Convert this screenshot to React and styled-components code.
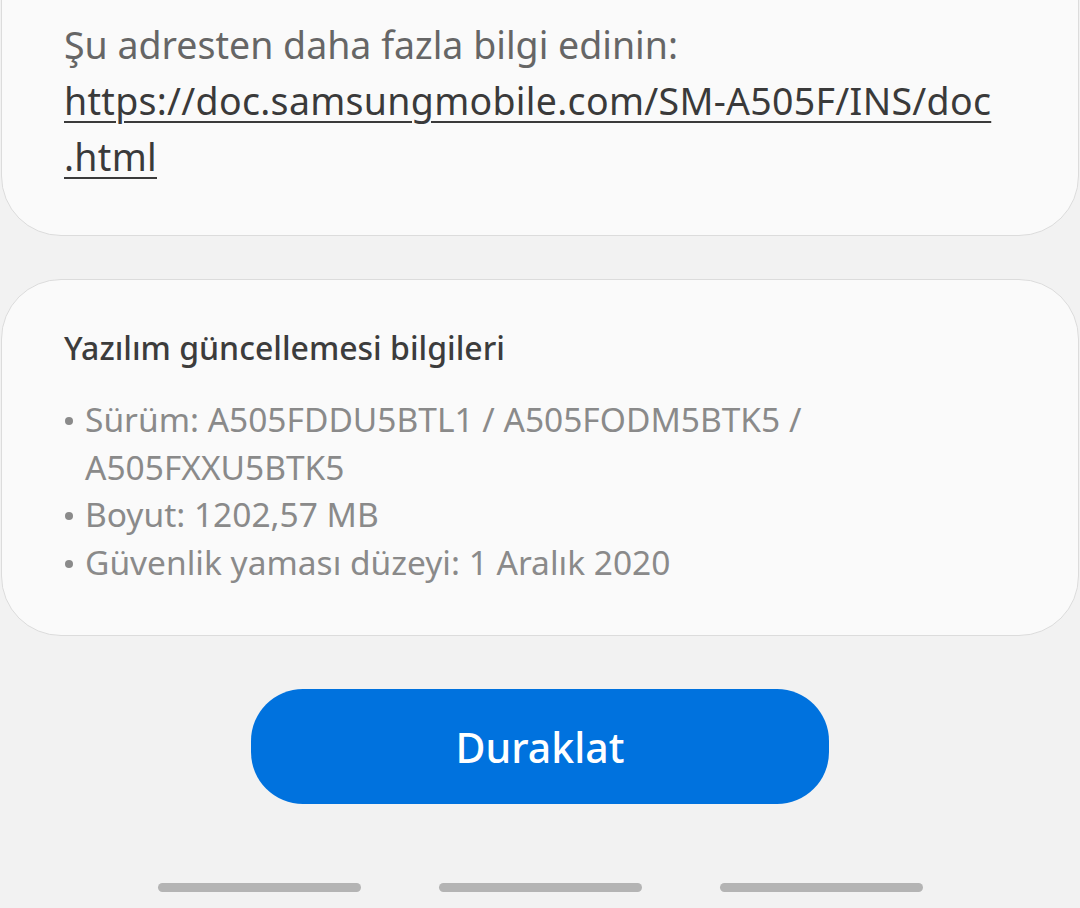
import React from 'react';
import styled, { createGlobalStyle } from 'styled-components';

const GlobalStyle = createGlobalStyle`
  html, body {
    margin: 0;
    padding: 0;
    background: #f2f2f2;
    font-family: "Noto Sans", "Open Sans", sans-serif;
    overflow: hidden;
  }
`;

const Screen = styled.div`
  width: 1080px;
  height: 908px;
  display: flex;
  flex-direction: column;
  align-items: center;
  overflow: hidden;
`;

const Card = styled.div`
  box-sizing: border-box;
  width: 1078px;
  background: #fafafa;
  border: 1px solid #dcdcdc;
  border-radius: 60px;
  padding: ${(p) => p.$padding};
  margin-top: ${(p) => p.$top};
`;

const Paragraph = styled.p`
  margin: 0;
  font-size: 37.5px;
  line-height: 56px;
  color: #666666;
`;

const Link = styled.a`
  color: #3a3a3a;
  text-decoration: underline;
  text-underline-offset: 6px;
  text-decoration-thickness: 2px;
  letter-spacing: 0.3px;
`;

const Title = styled.h3`
  margin: 0 0 28px;
  font-size: 32px;
  line-height: 40px;
  font-weight: 500;
  color: #3c3c3c;
`;

const List = styled.ul`
  margin: 0;
  padding: 0;
  list-style: none;
`;

const Item = styled.li`
  position: relative;
  padding-left: 21px;
  font-size: 33.5px;
  line-height: 47.5px;
  color: #8a8a8a;

  &::before {
    content: '';
    position: absolute;
    left: 1px;
    top: 21px;
    width: 8px;
    height: 8px;
    border-radius: 50%;
    background: #8a8a8a;
  }
`;

const Button = styled.button`
  margin-top: 53px;
  width: 578px;
  height: 115px;
  border: none;
  border-radius: 52px;
  background: #0072de;
  color: #ffffff;
  font-family: inherit;
  font-size: 41px;
  font-weight: 500;
  cursor: pointer;
`;

const NavRow = styled.div`
  margin-top: 79px;
  display: flex;
  gap: 78px;
`;

const NavPill = styled.div`
  width: 203px;
  height: 9px;
  border-radius: 5px;
  background: #b4b4b4;
`;

const App = () => (
  <>
    <GlobalStyle />
    <Screen>
      <Card $top="-80px" $padding="96px 62px 50px">
        <Paragraph>Şu adresten daha fazla bilgi edinin:</Paragraph>
        <Paragraph>
          <Link href="#">
            https://doc.samsungmobile.com/SM-A505F/INS/doc
            <br />
            .html
          </Link>
        </Paragraph>
      </Card>
      <Card $top="43px" $padding="48px 62px 49px">
        <Title>Yazılım güncellemesi bilgileri</Title>
        <List>
          <Item>Sürüm: A505FDDU5BTL1 / A505FODM5BTK5 / A505FXXU5BTK5</Item>
          <Item>Boyut: 1202,57 MB</Item>
          <Item>Güvenlik yaması düzeyi: 1 Aralık 2020</Item>
        </List>
      </Card>
      <Button>Duraklat</Button>
      <NavRow>
        <NavPill />
        <NavPill />
        <NavPill />
      </NavRow>
    </Screen>
  </>
);

export default App;
